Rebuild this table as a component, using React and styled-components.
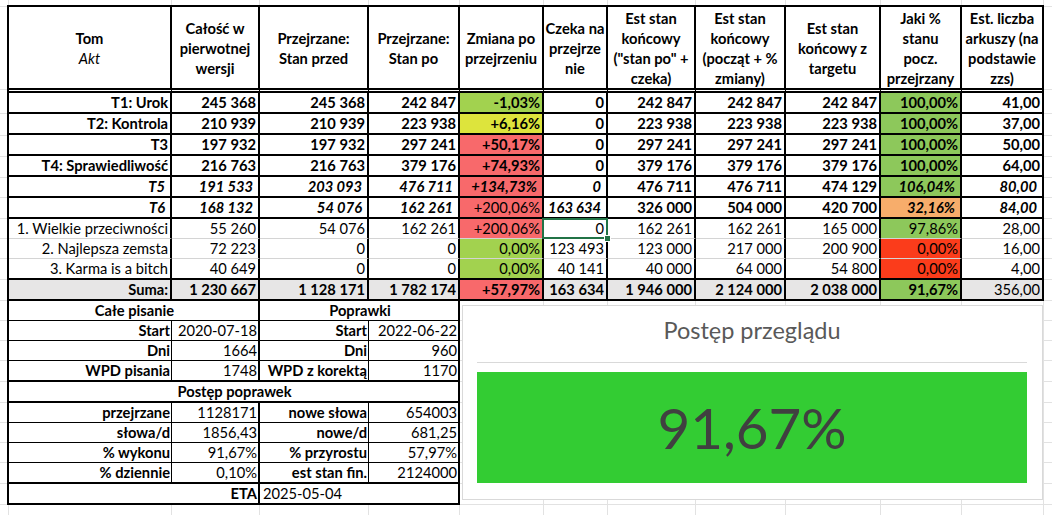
import React from 'react';
import styled, { createGlobalStyle } from 'styled-components';

const GlobalStyle = createGlobalStyle`
  html, body { margin: 0; padding: 0; background: #fff; }
  body { font-family: Lato, "Liberation Sans", sans-serif; }
  #root { width: 1052px; height: 515px; }
`;

const GRID = '#e2e2e2';
const vLines = [8, 171, 259, 368, 459, 543, 607, 695, 785, 880, 961, 1043];
const hLines = [6, 89, 113, 135, 156, 177, 197, 218, 238, 258, 279, 300, 320, 340, 360, 381, 402, 422, 442, 462, 483, 504];
const gridBg = [
  ...vLines.map((x) => `linear-gradient(${GRID}, ${GRID}) ${x}px 0 / 1px 100% no-repeat`),
  ...hLines.map((y) => `linear-gradient(${GRID}, ${GRID}) 0 ${y}px / 100% 1px no-repeat`),
].join(', ');

const FILL = {
  greenA: '#a2d24f',
  yellow: '#dde43c',
  red: '#f8696b',
  greenB: '#8dc85b',
  orange: '#f7ad6b',
  hot: '#fb3c1b',
  sum: '#e7e6e6',
};

const Sheet = styled.div`
  width: 1052px;
  height: 515px;
  overflow: hidden;
  box-sizing: border-box;
  padding: 5px 0 0 7px;
  background: ${gridBg}, #fff;
  font-family: Lato, "Liberation Sans", sans-serif;
  font-size: 14.7px;
  color: #000;
`;

const MainTable = styled.div`
  display: grid;
  grid-template-columns: 163px 88px 109px 91px 84px 64px 88px 90px 95px 81px 80px;
  width: fit-content;
  border: 2px solid #000;
  background: #fff;
`;

const HeadCell = styled.div`
  box-sizing: border-box;
  height: 86px;
  border-bottom: 5px double #000;
  border-right: ${(p) => (p.$last ? 'none' : '2px solid #000')};
  display: flex;
  flex-direction: column;
  align-items: center;
  justify-content: center;
  text-align: center;
  line-height: 20px;
  font-weight: 700;
  white-space: nowrap;
`;

const HeadSub = styled.span`
  font-weight: 400;
  font-style: italic;
`;

const borderFor = (b) => {
  if (b === 'thick') return '2px solid #000';
  if (b === 'thin') return '1px solid #d4d4d4';
  return 'none';
};

const DataCell = styled.div`
  position: relative;
  box-sizing: border-box;
  height: ${(p) => (p.$b === 'thick' ? 21 : p.$b === 'thin' ? 20 : 19)}px;
  border-bottom: ${(p) => borderFor(p.$b)};
  border-right: ${(p) => (p.$last ? 'none' : '2px solid #000')};
  background: ${(p) => p.$fill || 'transparent'};
  display: flex;
  align-items: center;
  justify-content: flex-end;
  padding: 0 ${(p) => (p.$italic ? 5 : 2)}px 0 2px;
  line-height: 19px;
  font-weight: ${(p) => (p.$bold ? 700 : 400)};
  font-style: ${(p) => (p.$italic ? 'italic' : 'normal')};
  white-space: nowrap;

  ${(p) =>
    p.$active &&
    `
    &::after {
      content: '';
      position: absolute;
      top: -1px; left: -2px; right: -2px; bottom: -1px;
      border: 2px solid #217346;
      pointer-events: none;
    }
    &::before {
      content: '';
      position: absolute;
      right: -5px; bottom: -4px;
      width: 5px; height: 5px;
      background: #217346;
      border: 1px solid #fff;
      z-index: 2;
    }
  `}
`;

const LowerRow = styled.div`
  display: flex;
  align-items: flex-start;
`;

const SideTable = styled.div`
  display: grid;
  grid-template-columns: 163px 88px 109px 89px;
  border: 2px solid #000;
  border-top: none;
  background: #fff;
`;

const SideCell = styled.div`
  box-sizing: border-box;
  grid-column: span ${(p) => p.$span || 1};
  height: ${(p) => (p.$b === 'thick' ? 21 : p.$b === 'thin' ? 20 : 19)}px;
  border-bottom: ${(p) => (p.$b === 'thick' ? '2px solid #000' : p.$b === 'thin' ? '1px solid #000' : 'none')};
  border-right: ${(p) => (p.$r === 'thick' ? '2px solid #000' : p.$r === 'thin' ? '1px solid #000' : 'none')};
  display: flex;
  align-items: center;
  justify-content: ${(p) => (p.$align === 'center' ? 'center' : p.$align === 'left' ? 'flex-start' : 'flex-end')};
  padding: 0 1px 0 3px;
  line-height: 19px;
  font-weight: ${(p) => (p.$bold ? 700 : 400)};
  white-space: nowrap;
`;

const Chart = styled.div`
  box-sizing: border-box;
  width: 581px;
  height: 195px;
  margin: 4px 0 0 2px;
  border: 1px solid #d9d9d9;
  background: #fff;
  display: flex;
  flex-direction: column;
  padding: 10px 15px 16px 14px;
`;

const ChartTitle = styled.div`
  text-align: center;
  font-size: 23.5px;
  line-height: 28px;
  color: #595959;
`;

const ChartRule = styled.div`
  height: 1px;
  margin-top: 18px;
  background: #d9d9d9;
`;

const ChartTile = styled.div`
  flex: 1;
  margin-top: 9px;
  background: #33cc33;
  display: flex;
  align-items: center;
  justify-content: center;
  font-size: 56.5px;
  line-height: 1;
  color: #404040;
`;

const headers = [
  null,
  ['Całość w', 'pierwotnej', 'wersji'],
  ['Przejrzane:', 'Stan przed'],
  ['Przejrzane:', 'Stan po'],
  ['Zmiana po', 'przejrzeniu'],
  ['Czeka na', 'przejrze', 'nie'],
  ['Est stan', 'końcowy', '("stan po" +', 'czeka)'],
  ['Est stan', 'końcowy', '(począt + %', 'zmiany)'],
  ['Est stan', 'końcowy z', 'targetu'],
  ['Jaki %', 'stanu', 'pocz.', 'przejrzany'],
  ['Est. liczba', 'arkuszy (na', 'podstawie', 'zzs)'],
];

// style codes: b = bold, bi = bold italic, r = regular
const rows = [
  {
    st: 'b', b: 'thick',
    cells: ['T1: Urok', '245 368', '245 368', '242 847', ['-1,03%', 'b', 'greenA'], '0', '242 847', '242 847', '242 847', ['100,00%', 'b', 'greenB'], '41,00'],
  },
  {
    st: 'b', b: 'thick',
    cells: ['T2: Kontrola', '210 939', '210 939', '223 938', ['+6,16%', 'b', 'yellow'], '0', '223 938', '223 938', '223 938', ['100,00%', 'b', 'greenB'], '37,00'],
  },
  {
    st: 'b', b: 'thick',
    cells: ['T3', '197 932', '197 932', '297 241', ['+50,17%', 'b', 'red'], '0', '297 241', '297 241', '297 241', ['100,00%', 'b', 'greenB'], '50,00'],
  },
  {
    st: 'b', b: 'thick',
    cells: ['T4: Sprawiedliwość', '216 763', '216 763', '379 176', ['+74,93%', 'b', 'red'], '0', '379 176', '379 176', '379 176', ['100,00%', 'b', 'greenB'], '64,00'],
  },
  {
    st: 'bi', b: 'thick',
    cells: ['T5', '191 533', '203 093', '476 711', ['+134,73%', 'bi', 'red'], '0', ['476 711', 'b'], ['476 711', 'b'], ['474 129', 'b'], ['106,04%', 'bi', 'greenB'], '80,00'],
  },
  {
    st: 'bi', b: 'thick',
    cells: ['T6', '168 132', '54 076', '162 261', ['+200,06%', 'r', 'red'], '163 634', ['326 000', 'b'], ['504 000', 'b'], ['420 700', 'b'], ['32,16%', 'bi', 'orange'], '84,00'],
  },
  {
    st: 'r', b: 'thin',
    cells: ['1. Wielkie przeciwności', '55 260', '54 076', '162 261', ['+200,06%', 'r', 'red'], ['0', 'r', null, true], '162 261', '162 261', '165 000', ['97,86%', 'r', 'greenB'], '28,00'],
  },
  {
    st: 'r', b: 'thin',
    cells: ['2. Najlepsza zemsta', '72 223', '0', '0', ['0,00%', 'r', 'greenA'], '123 493', '123 000', '217 000', '200 900', ['0,00%', 'r', 'hot'], '16,00'],
  },
  {
    st: 'r', b: 'thick',
    cells: ['3. Karma is a bitch', '40 649', '0', '0', ['0,00%', 'r', 'greenA'], '40 141', '40 000', '64 000', '54 800', ['0,00%', 'r', 'hot'], '4,00'],
  },
  {
    st: 'b', b: 'none', fill: 'sum',
    cells: ['Suma:', '1 230 667', '1 128 171', '1 782 174', ['+57,97%', 'b', 'red'], '163 634', '1 946 000', '2 124 000', '2 038 000', ['91,67%', 'b', 'greenB'], ['356,00', 'r']],
  },
];

const side = [
  [
    { t: 'Całe pisanie', span: 2, align: 'center', bold: true, r: 'thick', b: 'thin' },
    { t: 'Poprawki', span: 2, align: 'center', bold: true, b: 'thin' },
  ],
  [
    { t: 'Start', bold: true, r: 'thin', b: 'thin' },
    { t: '2020-07-18', r: 'thick', b: 'thin' },
    { t: 'Start', bold: true, r: 'thin', b: 'thin' },
    { t: '2022-06-22', b: 'thin' },
  ],
  [
    { t: 'Dni', bold: true, r: 'thin', b: 'thin' },
    { t: '1664', r: 'thick', b: 'thin' },
    { t: 'Dni', bold: true, r: 'thin', b: 'thin' },
    { t: '960', b: 'thin' },
  ],
  [
    { t: 'WPD pisania', bold: true, r: 'thin', b: 'thick' },
    { t: '1748', r: 'thick', b: 'thick' },
    { t: 'WPD z korektą', bold: true, r: 'thin', b: 'thick' },
    { t: '1170', b: 'thick' },
  ],
  [{ t: 'Postęp poprawek', span: 4, align: 'center', bold: true, b: 'thick' }],
  [
    { t: 'przejrzane', bold: true, r: 'thin', b: 'thin' },
    { t: '1128171', r: 'thick', b: 'thin' },
    { t: 'nowe słowa', bold: true, r: 'thin', b: 'thin' },
    { t: '654003', b: 'thin' },
  ],
  [
    { t: 'słowa/d', bold: true, r: 'thin', b: 'thin' },
    { t: '1856,43', r: 'thick', b: 'thin' },
    { t: 'nowe/d', bold: true, r: 'thin', b: 'thin' },
    { t: '681,25', b: 'thin' },
  ],
  [
    { t: '% wykonu', bold: true, r: 'thin', b: 'thin' },
    { t: '91,67%', r: 'thick', b: 'thin' },
    { t: '% przyrostu', bold: true, r: 'thin', b: 'thin' },
    { t: '57,97%', b: 'thin' },
  ],
  [
    { t: '% dziennie', bold: true, r: 'thin', b: 'thick' },
    { t: '0,10%', r: 'thick', b: 'thick' },
    { t: 'est stan fin.', bold: true, r: 'thin', b: 'thick' },
    { t: '2124000', b: 'thick' },
  ],
  [
    { t: 'ETA', span: 2, bold: true, r: 'thick', b: 'none' },
    { t: '2025-05-04', span: 2, align: 'left', b: 'none' },
  ],
];

export default function App() {
  return (
    <>
      <GlobalStyle />
      <Sheet>
        <MainTable>
          {headers.map((h, i) => (
            <HeadCell key={`h${i}`} $last={i === headers.length - 1}>
              {h === null ? (
                <>
                  <span>Tom</span>
                  <HeadSub>Akt</HeadSub>
                </>
              ) : (
                h.map((line, j) => <span key={j}>{line}</span>)
              )}
            </HeadCell>
          ))}
          {rows.map((row, ri) =>
            row.cells.map((c, ci) => {
              const [text, st, fill, active] = Array.isArray(c) ? c : [c, row.st, null, false];
              const style = st || row.st;
              return (
                <DataCell
                  key={`r${ri}c${ci}`}
                  $b={row.b}
                  $last={ci === row.cells.length - 1}
                  $bold={style === 'b' || style === 'bi'}
                  $italic={style === 'bi'}
                  $fill={fill ? FILL[fill] : row.fill ? FILL[row.fill] : null}
                  $active={active}
                >
                  {text}
                </DataCell>
              );
            })
          )}
        </MainTable>
        <LowerRow>
          <SideTable>
            {side.map((r, ri) =>
              r.map((c, ci) => (
                <SideCell
                  key={`s${ri}-${ci}`}
                  $span={c.span}
                  $align={c.align}
                  $bold={c.bold}
                  $r={c.r}
                  $b={c.b}
                >
                  {c.t}
                </SideCell>
              ))
            )}
          </SideTable>
          <Chart>
            <ChartTitle>Postęp przeglądu</ChartTitle>
            <ChartRule />
            <ChartTile>91,67%</ChartTile>
          </Chart>
        </LowerRow>
      </Sheet>
    </>
  );
}
